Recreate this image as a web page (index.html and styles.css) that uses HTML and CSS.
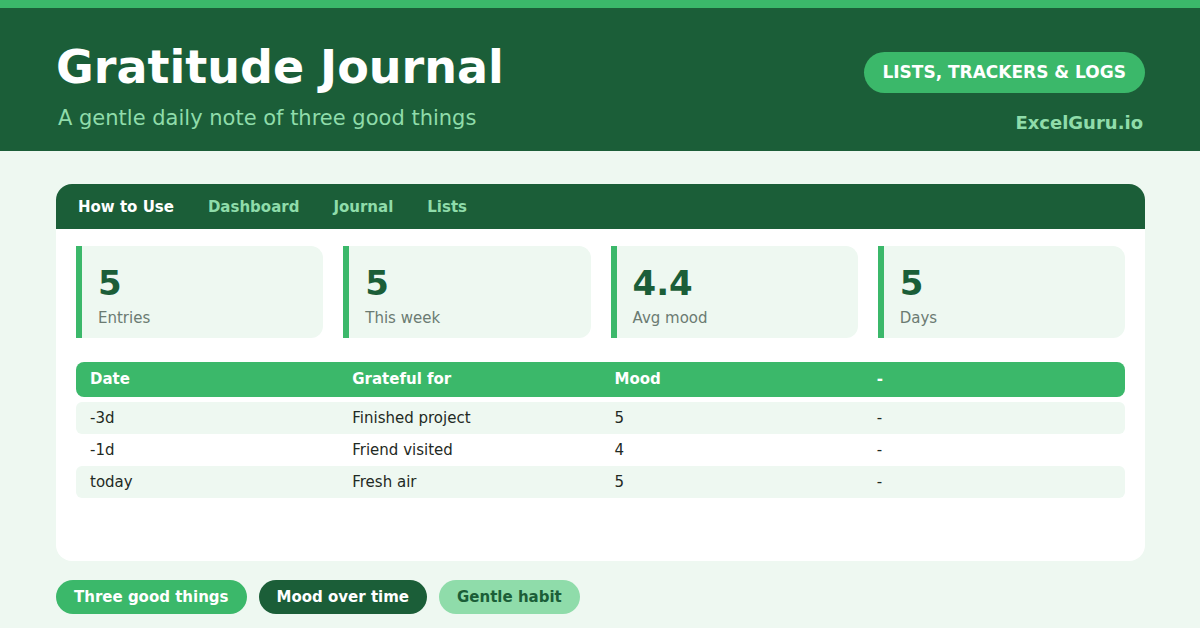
FILE: index.html
```html
<!DOCTYPE html>
<html lang="en">
<head>
    <meta charset="UTF-8">
    <meta name="viewport" content="width=device-width, initial-scale=1.0">
    <title>Gratitude Journal</title>
    <link rel="stylesheet" href="styles.css">
</head>
<body>
    <header class="hero">
        <div class="hero-text">
            <h1>Gratitude Journal</h1>
            <p class="subtitle">A gentle daily note of three good things</p>
        </div>
        <div class="hero-side">
            <span class="badge">LISTS, TRACKERS &amp; LOGS</span>
            <span class="brand">ExcelGuru.io</span>
        </div>
    </header>

    <main class="content">
        <div class="sheet">
            <nav class="tabs">
                <span class="tab active">How to Use</span>
                <span class="tab">Dashboard</span>
                <span class="tab">Journal</span>
                <span class="tab">Lists</span>
            </nav>
            <div class="sheet-body">
                <div class="stats">
                    <div class="stat">
                        <div class="stat-value">5</div>
                        <div class="stat-label">Entries</div>
                    </div>
                    <div class="stat">
                        <div class="stat-value">5</div>
                        <div class="stat-label">This week</div>
                    </div>
                    <div class="stat">
                        <div class="stat-value">4.4</div>
                        <div class="stat-label">Avg mood</div>
                    </div>
                    <div class="stat">
                        <div class="stat-value">5</div>
                        <div class="stat-label">Days</div>
                    </div>
                </div>
                <div class="table">
                    <div class="row head">
                        <span>Date</span><span>Grateful for</span><span>Mood</span><span>-</span>
                    </div>
                    <div class="row alt">
                        <span>-3d</span><span>Finished project</span><span>5</span><span>-</span>
                    </div>
                    <div class="row">
                        <span>-1d</span><span>Friend visited</span><span>4</span><span>-</span>
                    </div>
                    <div class="row alt">
                        <span>today</span><span>Fresh air</span><span>5</span><span>-</span>
                    </div>
                </div>
            </div>
        </div>
        <div class="chips">
            <span class="chip chip-green">Three good things</span>
            <span class="chip chip-dark">Mood over time</span>
            <span class="chip chip-light">Gentle habit</span>
        </div>
    </main>
</body>
</html>
```

FILE: styles.css
```css
body {
    font-family: "DejaVu Sans", Verdana, sans-serif;
    margin: 0;
    padding: 0;
    width: 1200px;
    height: 628px;
    overflow: hidden;
    background-color: #eef8f1;
}
.hero {
    background-color: #1b5e38;
    border-top: 8px solid #3bb86a;
    padding: 0 55px 0 56px;
    display: flex;
    justify-content: space-between;
    box-sizing: border-box;
    height: 151px;
}
.hero-text {
    padding-top: 32px;
}
h1 {
    margin: 0;
    font-size: 46px;
    line-height: 54px;
    font-weight: bold;
    color: #fff;
}
.subtitle {
    margin: 11px 0 0 2px;
    font-size: 21px;
    line-height: 26px;
    color: #8fdcaa;
}
.hero-side {
    padding-top: 44px;
    display: flex;
    flex-direction: column;
    align-items: flex-end;
}
.badge {
    background-color: #3bb86a;
    color: #fff;
    font-weight: bold;
    font-size: 17px;
    line-height: 41px;
    padding: 0 19px 0 18px;
    border-radius: 21px;
}
.brand {
    margin-top: 18px;
    margin-right: 2px;
    color: #8fdcaa;
    font-weight: bold;
    font-size: 18px;
    line-height: 24px;
}
.content {
    padding: 33px 55px 0 56px;
}
.sheet {
    background: #fff;
    border-radius: 16px;
    height: 377px;
    overflow: hidden;
}
.tabs {
    background-color: #1b5e38;
    height: 45px;
    display: flex;
    align-items: center;
    gap: 34px;
    padding-left: 22px;
}
.tab {
    color: #8fdcaa;
    font-weight: bold;
    font-size: 15px;
}
.tab.active {
    color: #fff;
}
.sheet-body {
    padding: 17px 20px 0 20px;
}
.stats {
    display: grid;
    grid-template-columns: repeat(4, 1fr);
    gap: 20px;
}
.stat {
    background-color: #eef8f1;
    border-left: 6px solid #3bb86a;
    border-radius: 0 12px 12px 0;
    height: 92px;
    box-sizing: border-box;
    padding: 17px 16px 0 16px;
}
.stat-value {
    color: #1b5e38;
    font-weight: bold;
    font-size: 34px;
    line-height: 40px;
}
.stat-label {
    color: #6b7b72;
    font-size: 15px;
    line-height: 20px;
    margin-top: 5px;
}
.table {
    margin-top: 24px;
}
.row {
    display: grid;
    grid-template-columns: repeat(4, 1fr);
    height: 32px;
    align-items: center;
    font-size: 15px;
    color: #1f2a24;
    border-radius: 6px;
}
.row.head {
    background-color: #3bb86a;
    color: #fff;
    font-weight: bold;
    height: 35px;
    border-radius: 8px;
    margin-bottom: 5px;
}
.row.alt {
    background-color: #eef8f1;
}
.row span {
    padding-left: 14px;
    padding-bottom: 1px;
}
.chips {
    display: flex;
    gap: 12px;
    margin-top: 19px;
}
.chip {
    font-weight: bold;
    font-size: 15px;
    line-height: 34px;
    padding: 0 18px;
    border-radius: 17px;
}
.chip-green {
    background-color: #3bb86a;
    color: #fff;
}
.chip-dark {
    background-color: #1b5e38;
    color: #fff;
}
.chip-light {
    background-color: #8fdcaa;
    color: #1b5e38;
}
```
